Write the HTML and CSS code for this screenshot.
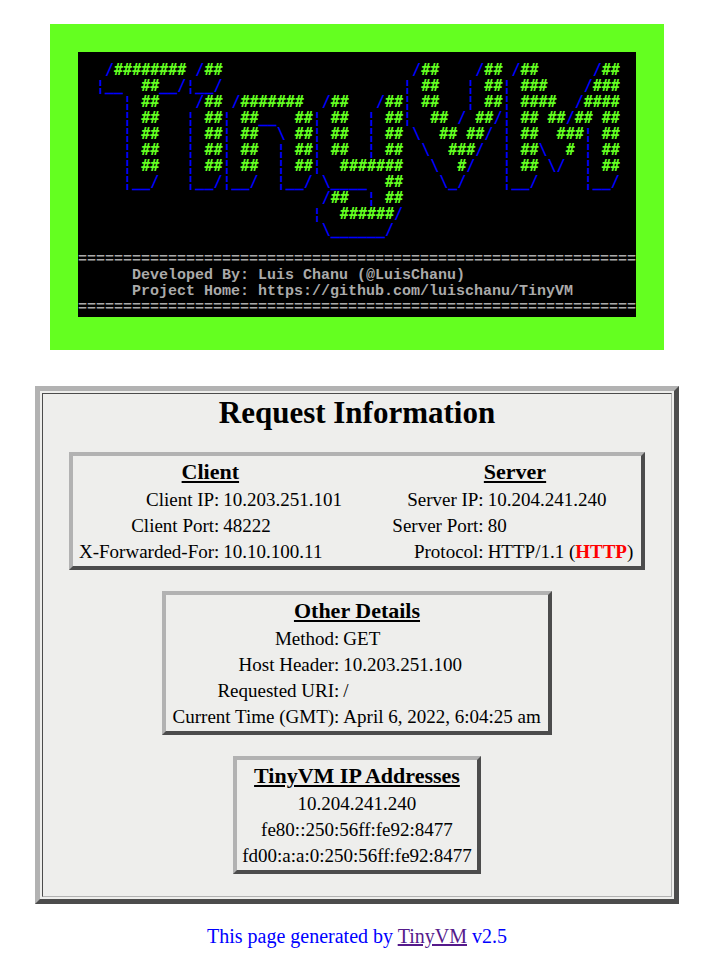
FILE: index.html
```html
<!DOCTYPE html>
<html lang="en">
<head>
<meta charset="utf-8">
<title>TinyVM</title>
<link rel="stylesheet" href="styles.css">
</head>
<body>
<header class="banner">
<div class="console">
<pre class="logo">   /<b>########</b> /<b>##</b>                     /<b>##</b>    /<b>##</b> /<b>##</b>      /<b>##</b>
  ¦__  <b>##</b>__/¦__/                    ¦ <b>##</b>   ¦ <b>##</b>¦ <b>###</b>    /<b>###</b>
     ¦ <b>##</b>    /<b>##</b> /<b>#######</b>  /<b>##</b>   /<b>##</b>¦ <b>##</b>   ¦ <b>##</b>¦ <b>####</b>  /<b>####</b>
     ¦ <b>##</b>   ¦ <b>##</b>¦ <b>##</b>__  <b>##</b>¦ <b>##</b>  ¦ <b>##</b>¦  <b>##</b> / <b>##</b>/¦ <b>##</b> <b>##</b>/<b>##</b> <b>##</b>
     ¦ <b>##</b>   ¦ <b>##</b>¦ <b>##</b>  \ <b>##</b>¦ <b>##</b>  ¦ <b>##</b> \  <b>##</b> <b>##</b>/ ¦ <b>##</b>  <b>###</b>¦ <b>##</b>
     ¦ <b>##</b>   ¦ <b>##</b>¦ <b>##</b>  ¦ <b>##</b>¦ <b>##</b>  ¦ <b>##</b>  \  <b>###</b>/  ¦ <b>##</b>\  <b>#</b> ¦ <b>##</b>
     ¦ <b>##</b>   ¦ <b>##</b>¦ <b>##</b>  ¦ <b>##</b>¦  <b>#######</b>   \  <b>#</b>/   ¦ <b>##</b> \/  ¦ <b>##</b>
     ¦__/   ¦__/¦__/  ¦__/ \____  <b>##</b>    \_/    ¦__/     ¦__/
                           /<b>##</b>  ¦ <b>##</b>
                          ¦  <b>######</b>/
                           \______/</pre>
<pre class="credits">==============================================================
      Developed By: Luis Chanu (@LuisChanu)
      Project Home: https://github.com/luischanu/TinyVM
==============================================================</pre>
</div>
</header>
<main class="report">
<div class="report-body">
<h1>Request Information</h1>
<table class="box">
<thead>
<tr><th colspan="2">Client</th><td class="spacer"></td><th colspan="2">Server</th></tr>
</thead>
<tbody>
<tr><td class="label client-label">Client IP:</td><td class="client-value">10.203.251.101</td><td></td><td class="label">Server IP:</td><td class="server-value">10.204.241.240</td></tr>
<tr><td class="label">Client Port:</td><td>48222</td><td></td><td class="label">Server Port:</td><td>80</td></tr>
<tr><td class="label">X-Forwarded-For:</td><td>10.10.100.11</td><td></td><td class="label">Protocol:</td><td>HTTP/1.1 (<strong class="insecure">HTTP</strong>)</td></tr>
</tbody>
</table>
<table class="box details">
<thead>
<tr><th colspan="2">Other Details</th></tr>
</thead>
<tbody>
<tr><td class="label">Method:</td><td>GET</td></tr>
<tr><td class="label">Host Header:</td><td>10.203.251.100</td></tr>
<tr><td class="label">Requested URI:</td><td>/</td></tr>
<tr><td class="label">Current Time (GMT):</td><td>April 6, 2022, 6:04:25 am</td></tr>
</tbody>
</table>
<table class="box addresses">
<thead>
<tr><th>TinyVM IP Addresses</th></tr>
</thead>
<tbody>
<tr><td>10.204.241.240</td></tr>
<tr><td>fe80::250:56ff:fe92:8477</td></tr>
<tr><td>fd00:a:a:0:250:56ff:fe92:8477</td></tr>
</tbody>
</table>
</div>
</main>
<footer class="footer">This page generated by <a href="#">TinyVM</a> v2.5</footer>
</body>
</html>
```
FILE: styles.css
```css
* {
  box-sizing: border-box;
}

body {
  margin: 0;
  padding: 24px 2px 16px 0;
  background: #fff;
  color: #000;
  font: 19px/22px "Liberation Serif", "Times New Roman", serif;
  display: flex;
  flex-direction: column;
  align-items: center;
}

.banner {
  background: #64ff20;
  padding: 28px 28px 33px;
}

.console {
  background: #000;
  padding: 10px 0 1px;
}

.logo,
.credits {
  margin: 0;
  font: 15px/16px "Liberation Mono", "Courier New", monospace;
}

.logo {
  color: #00f;
  font-family: "DejaVu Sans Mono", monospace;
  font-weight: bold;
}

.logo b {
  color: #64ff20;
}

.credits {
  margin-top: 14px;
  color: #aaa;
  font-weight: bold;
}

.report {
  margin-top: 36px;
  padding: 2px;
  border: 5px solid;
  border-color: #b2b2b2 #4c4c4c #4c4c4c #b2b2b2;
  background: #eeeeec;
}

.report-body {
  padding: 1px 26px 22px;
  border: 1px solid;
  border-color: #4c4c4c #b2b2b2 #b2b2b2 #4c4c4c;
  display: flex;
  flex-direction: column;
  align-items: center;
  gap: 21px;
}

h1 {
  margin: 0;
  font-size: 31px;
  line-height: 36px;
}

.box {
  border: 4px solid;
  border-color: #b2b2b2 #4c4c4c #4c4c4c #b2b2b2;
  border-collapse: separate;
  border-spacing: 2px;
}

.box th,
.box td {
  padding: 1px;
  white-space: nowrap;
}

.box th {
  font-size: 22px;
  line-height: 26px;
  text-decoration: underline;
}

.box .label {
  text-align: right;
}

.box .spacer {
  min-width: 42px;
}

.box .client-label {
  min-width: 145px;
}

.box .client-value {
  min-width: 123px;
}

.box .server-value {
  min-width: 152px;
}

.details {
  min-width: 390px;
}

.addresses {
  min-width: 248px;
  text-align: center;
}

.insecure {
  color: #f00;
}

.footer {
  margin-top: 21px;
  color: #00f;
  font-size: 20px;
}

.footer a {
  color: #551a8b;
}
```
